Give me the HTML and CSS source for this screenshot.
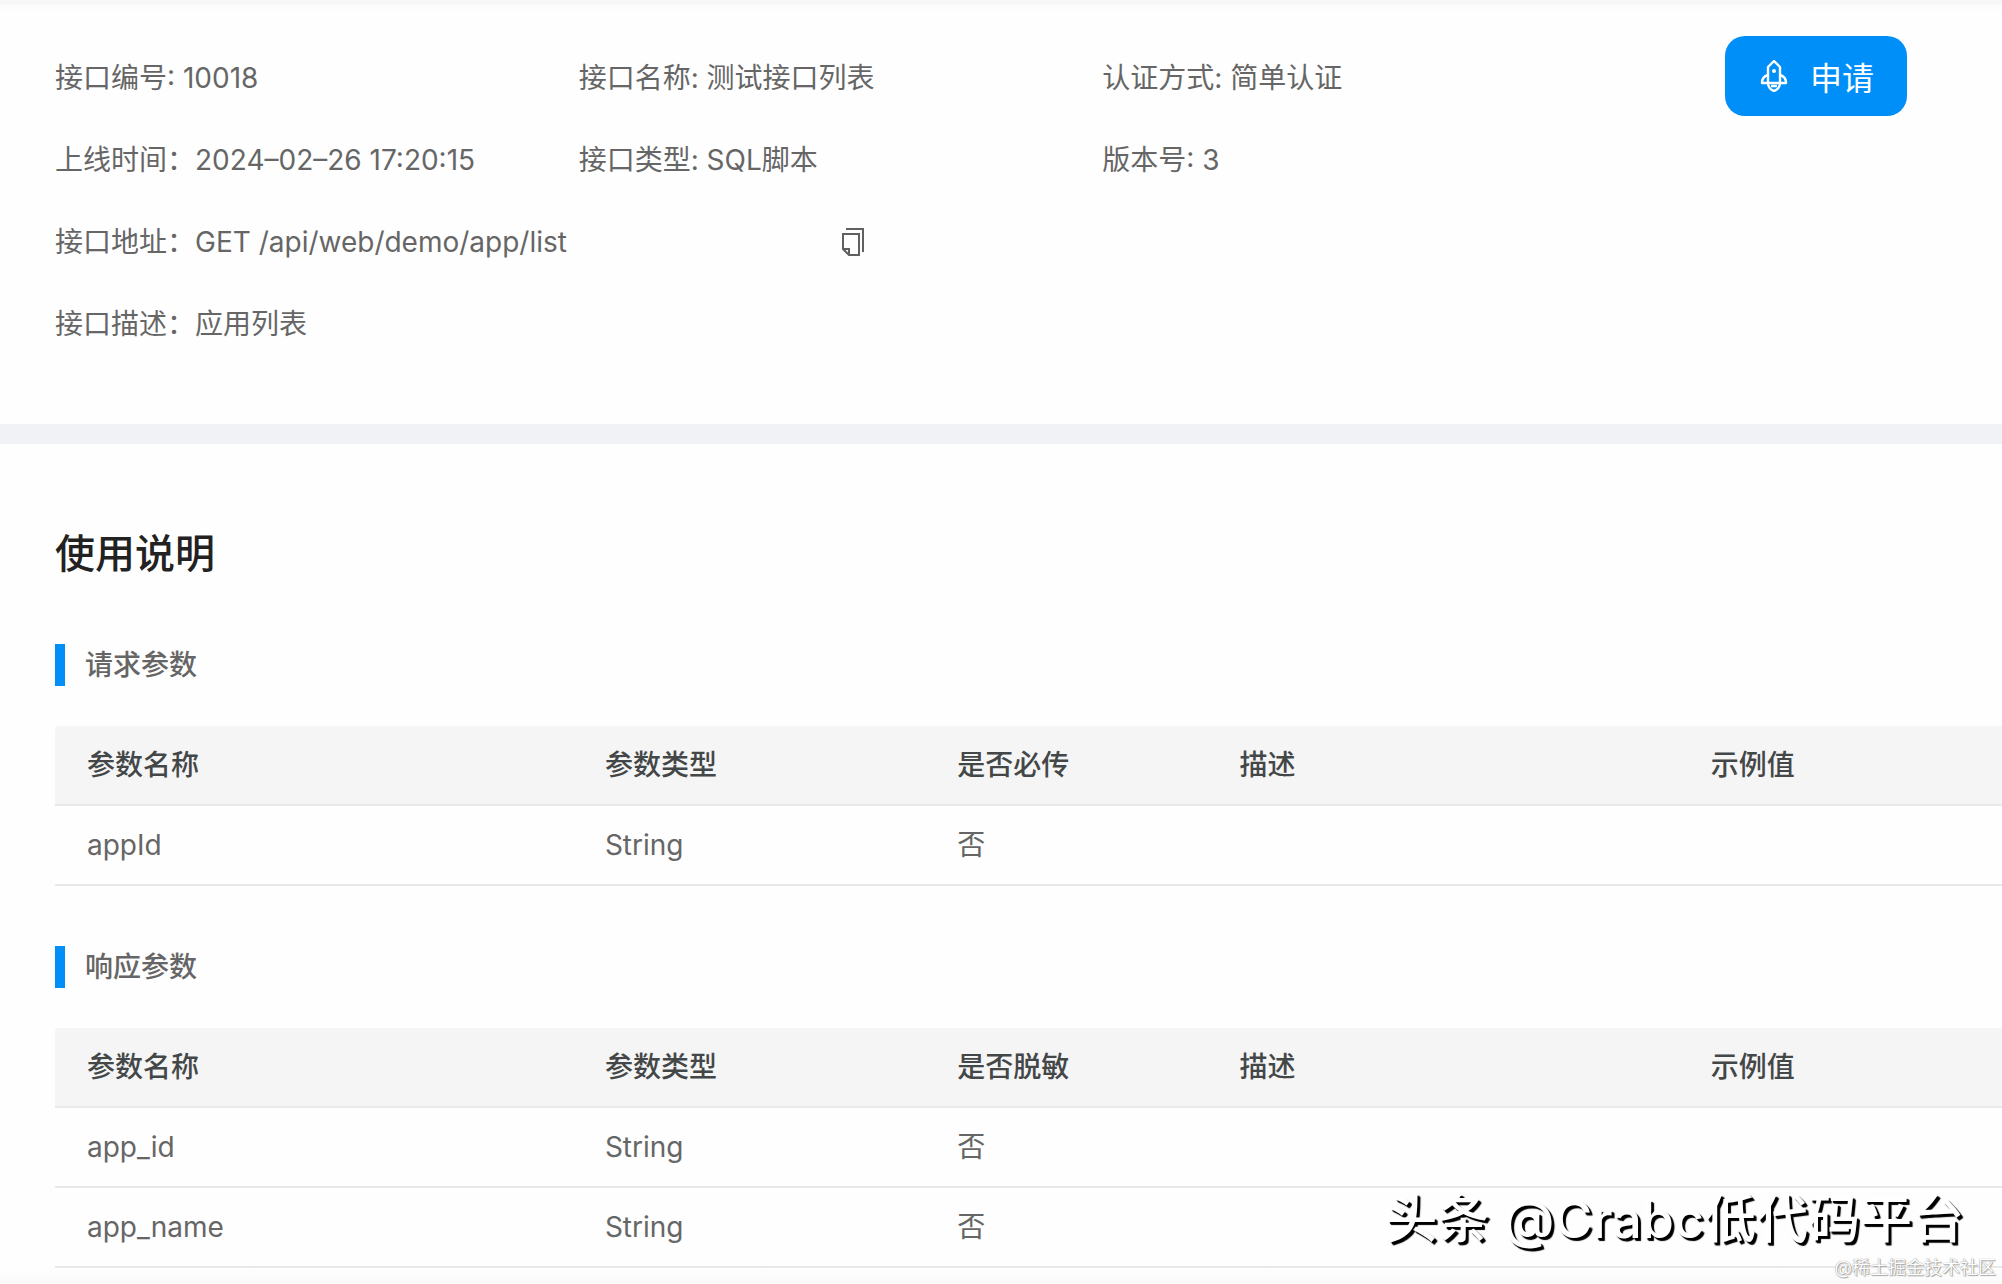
FILE: index.html
```html
<!doctype html>
<html lang="zh-CN">
<head>
  <meta charset="UTF-8">
  <meta name="viewport" content="width=device-width, initial-scale=1.0">
  <title>测试接口列表</title>
  <link rel="stylesheet" href="styles.css">
</head>
<body>
  <header class="api-info">
    <div class="info-grid">
      <div class="info-item">接口编号: 10018</div>
      <div class="info-item">接口名称: 测试接口列表</div>
      <div class="info-item">认证方式: 简单认证</div>
      <div class="info-item">上线时间：2024–02–26 17:20:15</div>
      <div class="info-item">接口类型: SQL脚本</div>
      <div class="info-item">版本号: 3</div>
      <div class="info-item info-row">
        <span class="address">接口地址：GET&nbsp;/api/web/demo/app/list</span>
        <button class="copy-button" type="button" aria-label="复制">
          <svg viewBox="0 0 24 28" width="24" height="28" fill="none" stroke="currentColor" stroke-width="2">
            <path d="M5 1H22V24"/>
            <path d="M2 6H18V27H8L2 21Z"/>
            <path d="M2 21H8V27"/>
          </svg>
        </button>
      </div>
      <div class="info-item info-row">接口描述：应用列表</div>
    </div>
    <button class="apply-button" type="button">
      <svg viewBox="0 0 32 32" width="32" height="32" fill="none" stroke="currentColor" stroke-width="2.4" stroke-linejoin="round">
        <path d="M16 1L10 7V23H22V7Z"/>
        <path d="M10 15C6 16 4 19 4 23H10M22 15C26 16 28 19 28 23H22"/>
        <path d="M10 23C10 27 13 30 16 31C19 30 22 27 22 23M13 26H19"/>
        <circle cx="16" cy="11" r="2" fill="currentColor" stroke="none"/>
      </svg>
      <span>申请</span>
    </button>
  </header>

  <main class="usage">
    <h1 class="usage-title">使用说明</h1>

    <section class="param-section">
      <h2 class="param-title">请求参数</h2>
      <table class="param-table">
        <thead>
          <tr>
            <th class="col-name">参数名称</th>
            <th class="col-type">参数类型</th>
            <th class="col-flag">是否必传</th>
            <th class="col-desc">描述</th>
            <th>示例值</th>
          </tr>
        </thead>
        <tbody>
          <tr><td>appId</td><td>String</td><td>否</td><td></td><td></td></tr>
        </tbody>
      </table>
    </section>

    <section class="param-section">
      <h2 class="param-title">响应参数</h2>
      <table class="param-table">
        <thead>
          <tr>
            <th class="col-name">参数名称</th>
            <th class="col-type">参数类型</th>
            <th class="col-flag">是否脱敏</th>
            <th class="col-desc">描述</th>
            <th>示例值</th>
          </tr>
        </thead>
        <tbody>
          <tr><td>app_id</td><td>String</td><td>否</td><td></td><td></td></tr>
          <tr><td>app_name</td><td>String</td><td>否</td><td></td><td></td></tr>
        </tbody>
      </table>
    </section>
  </main>

  <div class="watermark">头条 @Crabc低代码平台</div>
  <div class="community">@稀土掘金技术社区</div>
</body>
</html>
```
FILE: styles.css
```css
* {
  box-sizing: border-box;
}

body {
  position: relative;
  margin: 0;
  min-height: 100vh;
  background: #fefefe;
  color: #666;
  font-family: Inter, "Noto Sans CJK SC", sans-serif;
  font-size: 28px;
  line-height: 42px;
}

button {
  font-family: inherit;
  cursor: pointer;
}

/* 接口基本信息 */
.api-info {
  display: flex;
  align-items: flex-start;
  gap: 99px;
  padding: 36px 95px 79px 55px;
  background: linear-gradient(#f7f7f7 4px, #fcfcfc 5px, #fefefe 14px);
  border-bottom: 20px solid #f0f2f5;
}

.info-grid {
  flex: 1;
  display: grid;
  grid-template-columns: repeat(3, 1fr);
  row-gap: 40px;
  padding-top: 21px;
}

.info-item {
  white-space: nowrap;
}

.info-row {
  grid-column: 1 / -1;
  display: flex;
  align-items: center;
}

.address {
  width: 50%;
}

.copy-button {
  display: flex;
  padding: 0;
  border: none;
  background: none;
  color: #606060;
}

.apply-button {
  display: flex;
  align-items: center;
  justify-content: center;
  gap: 20px;
  min-width: 182px;
  height: 80px;
  padding: 0 32px;
  border: none;
  border-radius: 20px;
  background: #008ff9;
  color: #fff;
  font-size: 32px;
}

/* 使用说明 */
.usage {
  padding: 80px 0 16px 55px;
  background: linear-gradient(to top, #fafafa, #fefefe 16px);
}

.usage-title {
  margin: 0;
  color: #222;
  font-size: 40px;
  font-weight: 500;
  line-height: 60px;
}

.param-section {
  margin-top: 60px;
}

.param-title {
  margin: 0 0 40px;
  padding-left: 20px;
  border-left: 10px solid #008ff9;
  font-size: 28px;
  font-weight: 500;
}

.param-table {
  width: 100%;
  table-layout: fixed;
  border-collapse: separate;
  border-spacing: 0;
}

.param-table th,
.param-table td {
  height: 80px;
  padding: 0 32px;
  border-bottom: 2px solid #e8eaea;
  text-align: left;
}

.param-table th {
  background: #f5f5f5;
  color: #444748;
  font-weight: 500;
}

.param-table th:first-child {
  border-top-left-radius: 4px;
}

.col-name {
  width: 26.6%;
}

.col-type {
  width: 18.1%;
}

.col-flag {
  width: 14.5%;
}

.col-desc {
  width: 24.2%;
}

/* 水印 */
.watermark,
.community {
  position: absolute;
  color: #fff;
  white-space: nowrap;
}

.watermark {
  right: 38px;
  bottom: 34px;
  font-size: 52px;
  font-weight: 500;
  line-height: 60px;
  text-shadow: 2px 2px 1px #000, 3px 3px 1px #000;
}

.community {
  right: 6px;
  bottom: 4px;
  font-size: 18px;
  line-height: 24px;
  text-shadow: 0 0 1px #777, 1px 1px 1px #aaa;
}
```
